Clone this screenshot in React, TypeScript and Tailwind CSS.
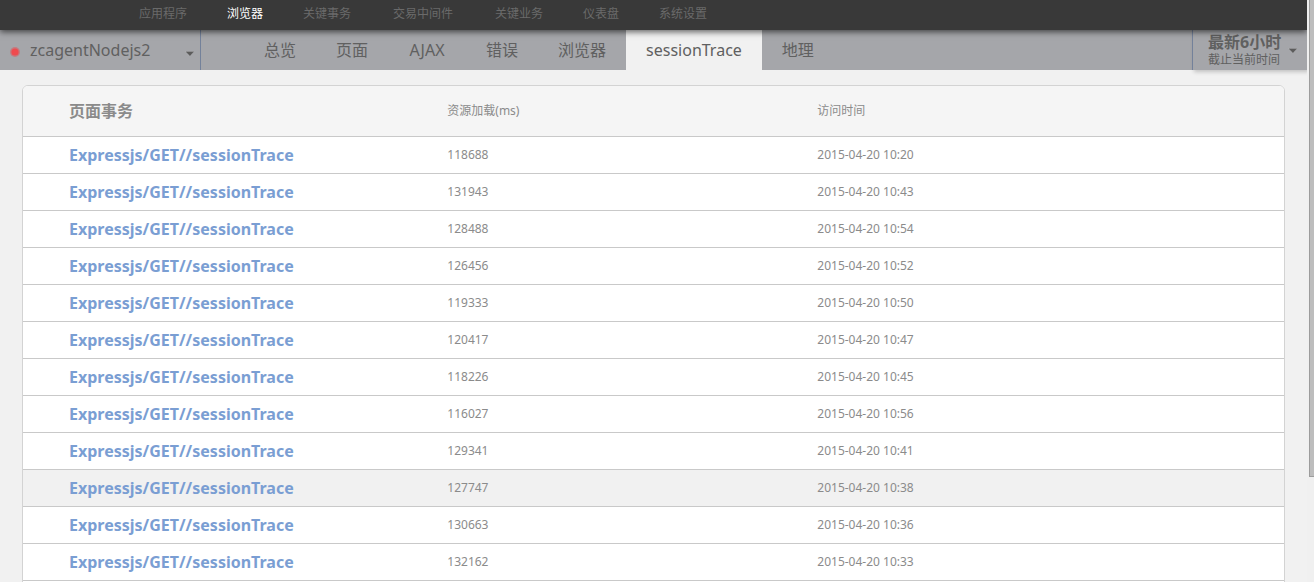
const navItems = ["应用程序", "浏览器", "关键事务", "交易中间件", "关键业务", "仪表盘", "系统设置"];
const tabs = ["总览", "页面", "AJAX", "错误", "浏览器", "sessionTrace", "地理"];

const rows = [
  { load: "118688", time: "2015-04-20 10:20" },
  { load: "131943", time: "2015-04-20 10:43" },
  { load: "128488", time: "2015-04-20 10:54" },
  { load: "126456", time: "2015-04-20 10:52" },
  { load: "119333", time: "2015-04-20 10:50" },
  { load: "120417", time: "2015-04-20 10:47" },
  { load: "118226", time: "2015-04-20 10:45" },
  { load: "116027", time: "2015-04-20 10:56" },
  { load: "129341", time: "2015-04-20 10:41" },
  { load: "127747", time: "2015-04-20 10:38", highlighted: true },
  { load: "130663", time: "2015-04-20 10:36" },
  { load: "132162", time: "2015-04-20 10:33" },
];

function Caret() {
  return (
    <svg width="9" height="5" viewBox="0 0 9 5" aria-hidden="true" className="block shrink-0">
      <path d="M0 0H9L4.5 5Z" fill="#c4c5c8" />
      <path d="M0.5 0.5H9L4.9 5Z" fill="#5c5c5c" />
    </svg>
  );
}

function TopNav() {
  return (
    <nav className="relative z-10 flex h-[30px] items-center gap-10 bg-[#393939] pb-0.5 pl-[139px] text-xs shadow-[0_2px_6px_rgba(0,0,0,0.6)]">
      {navItems.map((item) => (
        <a
          key={item}
          href="#"
          className={`whitespace-nowrap ${item === "浏览器" ? "text-white" : "text-[#6a6a6a]"} ${
            item.length === 5 ? "w-16 text-center" : ""
          }`}
        >
          {item}
        </a>
      ))}
    </nav>
  );
}

function TabBar() {
  return (
    <div className="flex h-10 bg-[#a5a6aa] text-base text-[#606060]">
      <button
        type="button"
        className="flex w-[201px] shrink-0 items-center border-r border-[#73819a] pr-1.5 pl-2.5"
      >
        <svg width="10" height="10" viewBox="0 0 10 10" aria-hidden="true" className="mt-1 mr-2.5">
          <circle cx="5" cy="5" r="5" fill="#e8474d" opacity="0.45" />
          <circle cx="5" cy="5" r="3.6" fill="#ef4a4e" />
        </svg>
        <span className="flex-1 text-left">zcagentNodejs2</span>
        <span className="mt-1.5">
          <Caret />
        </span>
      </button>
      <div className="ml-[43px] flex flex-1">
        {tabs.map((tab) => (
          <a
            key={tab}
            href="#"
            className={`flex items-center justify-center px-5 whitespace-nowrap ${
              tab === "sessionTrace" ? "bg-[#f1f1f1]" : ""
            } ${tab === "AJAX" ? "min-w-[78px]" : ""}`}
          >
            {tab}
          </a>
        ))}
      </div>
      <button
        type="button"
        className="flex w-[115px] shrink-0 items-center justify-between border-l border-[#73819a] bg-[#a5a6aa] pr-2.5 pl-[15px] text-left shadow-[2px_2px_4px_rgba(0,0,0,0.2)]"
      >
        <span className="flex flex-col whitespace-nowrap">
          <span className="text-base leading-5 font-bold">最新6小时</span>
          <span className="text-xs leading-4">截止当前时间</span>
        </span>
        <Caret />
      </button>
    </div>
  );
}

function TraceTable() {
  return (
    <div className="mx-[22px] mt-[15px] overflow-hidden rounded-md border border-[#d3d3d3] bg-white pb-4">
      <table className="w-full table-fixed border-collapse text-left text-xs text-[#8b8b8b]">
        <thead>
          <tr className="h-[50px] border-b border-[#c9c9c9] bg-[#f5f5f5]">
            <th className="w-[30%] pl-[46px] text-base font-bold">页面事务</th>
            <th className="w-[370px] pl-[46px] font-normal">资源加载(ms)</th>
            <th className="pl-[46px] font-normal">访问时间</th>
          </tr>
        </thead>
        <tbody>
          {rows.map((row) => (
            <tr
              key={row.time}
              className={`h-[37px] border-b border-[#c9c9c9] ${row.highlighted ? "bg-[#f1f1f1]" : "bg-white"}`}
            >
              <td className="pl-[46px]">
                <a href="#" className="text-base font-bold text-[#7a9ed3]">
                  Expressjs/GET//sessionTrace
                </a>
              </td>
              <td className="pl-[46px]">{row.load}</td>
              <td className="pl-[46px]">{row.time}</td>
            </tr>
          ))}
        </tbody>
      </table>
    </div>
  );
}

export default function App() {
  return (
    <div className="flex h-screen overflow-hidden bg-[#f1f1f1] font-['Noto_Sans','Noto_Sans_CJK_SC',sans-serif]">
      <main className="min-w-0 flex-1 overflow-hidden">
        <TopNav />
        <TabBar />
        <TraceTable />
      </main>
      <div className="w-[7px] shrink-0 bg-[#f0f0f0] pl-0.5">
        <div className="h-[82vh] border-b border-l border-[#9c9c9c] bg-[#bdbdbd]" />
      </div>
    </div>
  );
}
